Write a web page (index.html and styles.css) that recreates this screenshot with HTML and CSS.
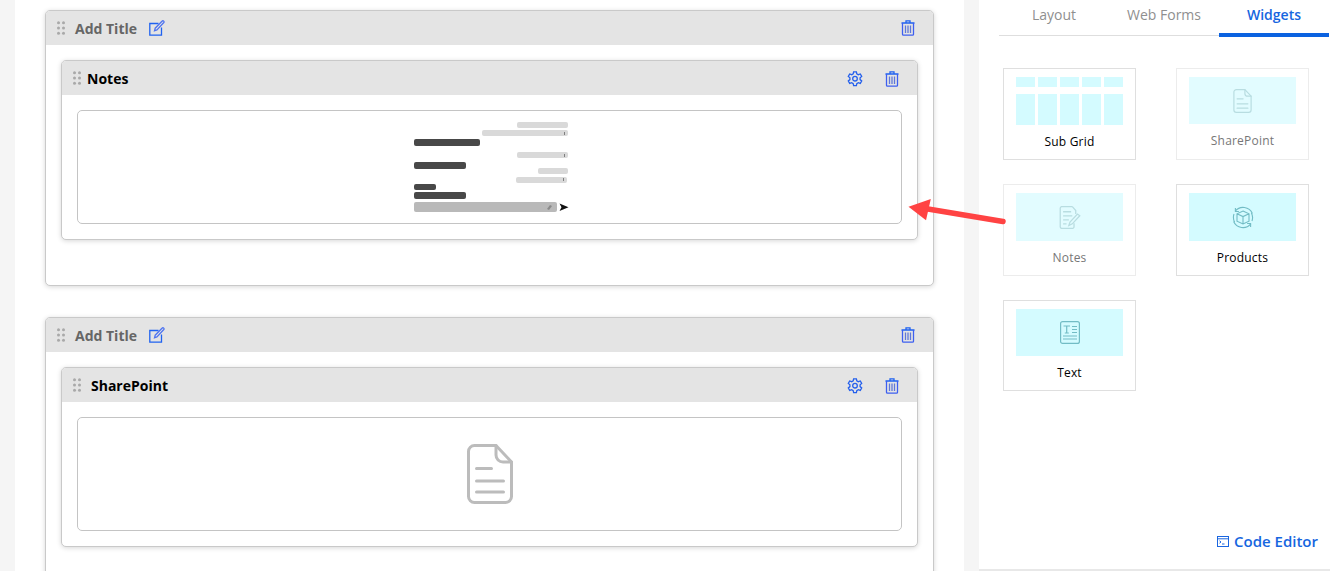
FILE: index.html
```html
<!DOCTYPE html>
<html lang="en">
<head>
  <meta charset="UTF-8">
  <title>Form Designer</title>
  <link rel="stylesheet" href="styles.css">
</head>
<body>

<svg width="0" height="0" class="defs">
  <symbol id="i-grip" viewBox="0 0 8 14"><g fill="#a9a9a9"><circle cx="1.5" cy="1.8" r="1.5"/><circle cx="6.5" cy="1.8" r="1.5"/><circle cx="1.5" cy="7" r="1.5"/><circle cx="6.5" cy="7" r="1.5"/><circle cx="1.5" cy="12.2" r="1.5"/><circle cx="6.5" cy="12.2" r="1.5"/></g></symbol>
  <symbol id="i-edit" viewBox="0 0 16 16"><g fill="none" stroke="#1f62f0" stroke-width="1.3"><path d="M9.5 3.5H.8v11.7h11.700V7.500"/><path d="M5.500 10.800l.7-2.600L13 1.200c.6-.6 1.200-.6 1.700-.1s.5 1.100-.1 1.700L7.900 9.900z" stroke="#4f74f0"/></g></symbol>
  <symbol id="i-trash" viewBox="0 0 14 16"><g fill="none" stroke="#1f62f0" stroke-width="1.3"><path d="M.5 3h13M5 3V.8h4V3"/><path d="M1.500 3v11.200c0 .6.4 1 1 1h9c.6 0 1-.4 1-1V3" stroke="#3d5ff0"/><path d="M4.500 5.500v7.500M7 5.500v7.500M9.500 5.500v7.500" stroke="#5f78d8"/></g></symbol>
  <symbol id="i-gear" viewBox="0 0 16 16"><g fill="none" stroke="#2560ec" stroke-width="1.300"><path d="M6.600.8h2.800l.4 2 1.500.9 2-.7 1.400 2.400-1.600 1.400v1.800l1.600 1.400-1.400 2.400-2-.7-1.500.9-.4 2H6.600l-.4-2-1.500-.9-2 .7L1.300 10l1.600-1.400V6.800L1.300 5.400l1.400-2.400 2 .7 1.500-.9z"/><circle cx="8" cy="7.700" r="2.300"/></g></symbol>
  <symbol id="i-doc" viewBox="0 0 46 60"><g fill="none" stroke="currentColor" stroke-width="3" stroke-linecap="round" stroke-linejoin="round"><path d="M29 1.500H7.500a6 6 0 0 0-6 6v45a6 6 0 0 0 6 6h31a6 6 0 0 0 6-6V18z"/><path d="M29 1.500V11a7 7 0 0 0 7 7h8.500"/><path d="M9.500 24.500h15M9.500 37h27M9.500 48h27"/></g></symbol>
  <symbol id="i-notes" viewBox="0 0 18 20"><g fill="none" stroke="currentColor" stroke-width="1.100"><path d="M11 .5H2A1.500 1.500 0 0 0 .5 2v16A1.500 1.500 0 0 0 2 19.500h9a1.500 1.500 0 0 0 1.500-1.500v-3M11 .5l3 3.500v3"/><path d="M3 5h7M3 8.500h8M3 12h5M3 15.500h3"/><path d="M8 17l1-3 6.500-7 2 1.500-6.500 7z"/></g></symbol>
  <symbol id="i-box" viewBox="0 0 22 22"><g fill="none" stroke="currentColor" stroke-width="1.100"><path d="M3.200 4.600A10.200 10.200 0 0 1 20.400 7M18.800 17.400A10.200 10.200 0 0 1 1.600 15"/><path d="M2 7.500a10 10 0 0 0 .6 8M20 14.500a10 10 0 0 0-.6-8"/><path d="M3.400 1.500v3.500h3.500M18.600 20.500V17h-3.500"/><path d="M11 4.500l6 2.800v7.400l-6 2.800-6-2.800V7.300zM5 7.300l6 2.800 6-2.800M11 10.100v7.400"/></g></symbol>
  <symbol id="i-text" viewBox="0 0 20 23"><g fill="none" stroke="currentColor" stroke-width="1.200"><rect x=".6" y=".6" width="18.800" height="21.800" rx="2"/><path d="M3.500 5h6.500M6.700 5v7M4.800 12h4M12 5.500h5M12 8.500h5M12 11.500h5M3 15h14M3 18h14"/></g></symbol>
  <symbol id="i-console" viewBox="0 0 12 11"><g fill="none" stroke="#1a66e0" stroke-width="1"><rect x=".5" y=".5" width="11" height="10"/><path d="M.5 2.800h11"/><path d="M2.500 4.800l1.500 1.200-1.500 1.200M5 8h2.500"/></g></symbol>
</svg>

<div class="page">
  <div class="strip"></div>

  <main class="canvas">
    <section class="card">
      <div class="bar">
        <svg class="grip"><use href="#i-grip"/></svg>
        <span class="section-title">Add Title</span>
        <svg class="ico edit"><use href="#i-edit"/></svg>
        <svg class="ico trash end"><use href="#i-trash"/></svg>
      </div>
      <div class="card-body">
        <div class="card inner">
          <div class="bar">
            <svg class="grip"><use href="#i-grip"/></svg>
            <span class="widget-title">Notes</span>
            <svg class="ico gear end"><use href="#i-gear"/></svg>
            <svg class="ico trash"><use href="#i-trash"/></svg>
          </div>
          <div class="card-body">
            <div class="preview">
              <svg class="chat" width="190" height="112" viewBox="395 111 190 112">
                <g fill="#d9d9d9">
                  <rect x="517" y="122" width="51" height="6" rx="2"/>
                  <rect x="482" y="130" width="86" height="6" rx="2"/>
                  <rect x="517" y="152" width="51" height="6" rx="2"/>
                  <rect x="538" y="168" width="30" height="6" rx="2"/>
                  <rect x="516" y="177" width="51" height="6" rx="2"/>
                </g>
                <g fill="#7f7f7f">
                  <rect x="564" y="132" width="1" height="3"/>
                  <rect x="564" y="154" width="1" height="3"/>
                  <rect x="563" y="178" width="1" height="3"/>
                </g>
                <g fill="#484848">
                  <rect x="414" y="139" width="66" height="7" rx="2"/>
                  <rect x="414" y="162" width="52" height="7" rx="2"/>
                  <rect x="414" y="184" width="22" height="6" rx="2"/>
                  <rect x="414" y="192" width="52" height="7" rx="2"/>
                </g>
                <rect x="414" y="202" width="143" height="10" rx="2" fill="#b9b9b9"/>
                <path d="M547 209l3-4 2 1-3 4z" fill="#8a8a8a"/>
                <path d="M559.500 203.500l9 3.800-9 3.800 2-3.800z" fill="#111"/>
              </svg>
            </div>
          </div>
        </div>
      </div>
    </section>

    <section class="card">
      <div class="bar">
        <svg class="grip"><use href="#i-grip"/></svg>
        <span class="section-title">Add Title</span>
        <svg class="ico edit"><use href="#i-edit"/></svg>
        <svg class="ico trash end"><use href="#i-trash"/></svg>
      </div>
      <div class="card-body">
        <div class="card inner">
          <div class="bar">
            <svg class="grip"><use href="#i-grip"/></svg>
            <span class="widget-title wide">SharePoint</span>
            <svg class="ico gear end"><use href="#i-gear"/></svg>
            <svg class="ico trash"><use href="#i-trash"/></svg>
          </div>
          <div class="card-body">
            <div class="preview">
              <svg class="doc-big"><use href="#i-doc"/></svg>
            </div>
          </div>
        </div>
      </div>
    </section>
  </main>

  <div class="strip"></div>

  <aside class="sidebar">
    <nav class="tabs">
      <a class="tab">Layout</a>
      <a class="tab">Web Forms</a>
      <a class="tab active">Widgets</a>
    </nav>

    <div class="widgets">
      <div class="tile">
        <div class="thumb grid-thumb">
          <i></i><i></i><i></i><i></i><i></i>
          <i></i><i></i><i></i><i></i><i></i>
        </div>
        <span>Sub Grid</span>
      </div>
      <div class="tile off">
        <div class="thumb short"><svg class="doc-small"><use href="#i-doc"/></svg></div>
        <span>SharePoint</span>
      </div>
      <div class="tile off">
        <div class="thumb"><svg class="tile-ico"><use href="#i-notes"/></svg></div>
        <span>Notes</span>
      </div>
      <div class="tile">
        <div class="thumb"><svg class="tile-ico"><use href="#i-box"/></svg></div>
        <span>Products</span>
      </div>
      <div class="tile">
        <div class="thumb short"><svg class="tile-ico"><use href="#i-text"/></svg></div>
        <span>Text</span>
      </div>
    </div>

    <a class="code-editor"><svg class="console"><use href="#i-console"/></svg>Code Editor</a>
  </aside>
</div>

<svg class="arrow" width="110" height="36" viewBox="900 192 110 36">
  <path d="M1003 221.500L925 208.500" stroke="#ff4343" stroke-width="5.500" stroke-linecap="round"/>
  <path d="M908.500 206.800L930.800 199 926 220.300z" fill="#ff4343"/>
</svg>

</body>
</html>
```

FILE: styles.css
```css
html, body { margin: 0; height: 100%; overflow: hidden; }
body { font-family: "Open Sans", "Noto Sans", sans-serif; font-size: 13px; background-color: #fff; color: #000; }
.defs { position: absolute; }

.page { display: grid; grid-template-columns: 15px 949px 15px 351px; height: 571px; }
.strip { background-color: #f5f5f5; }

.canvas { padding: 10px 30px 0 30px; display: flex; flex-direction: column; gap: 31px; overflow: hidden; }

.card { background-color: #fff; border: 1px solid #c9c9c9; border-radius: 5px; box-shadow: 0 1px 5px rgba(0, 0, 0, 0.16); overflow: hidden; flex: none; }
.card > .card-body { padding: 15px 15px 45px; }
.card.inner > .card-body { padding: 15px; }
.bar { display: flex; align-items: center; height: 34px; background-color: #e4e4e4; padding: 0 18px 0 11px; }
.grip { width: 8px; height: 14px; flex: none; }
.section-title { font-size: 14px; font-weight: 700; color: #666; margin-left: 10px; }
.widget-title { font-size: 14px; font-weight: 700; color: #000; margin-left: 6px; }
.widget-title.wide { margin-left: 10px; }
.ico { flex: none; }
.edit { width: 16px; height: 16px; margin-left: 12px; }
.trash { width: 14px; height: 16px; }
.gear { width: 16px; height: 16px; margin-right: 22px; }
.inner .ico { margin-top: 1px; }
.end { margin-left: auto; }

.preview { display: flex; align-items: center; justify-content: center; height: 112px; border: 1px solid #c4c4c4; border-radius: 5px; }
.chat { display: block; }
.doc-big { width: 46px; height: 60px; color: #bcbcbc; }

.sidebar { display: flex; flex-direction: column; border-bottom: 2px solid #e8e8e8; box-sizing: border-box; }
.tabs { display: flex; height: 36px; box-sizing: border-box; margin: 0 1px 0 20px; border-bottom: 1px solid #dedede; }
.tab { box-sizing: border-box; width: 110px; height: 37px; line-height: 30px; text-align: center; font-size: 14px; color: #8f8f8f; }
.tab.active { color: #1666e0; font-weight: 600; border-bottom: 4px solid #0b62e0; }

.widgets { display: grid; grid-template-columns: 133px 133px; grid-template-rows: 92px 92px 91px; column-gap: 40px; row-gap: 24px; margin: 32px 0 0 24px; }
.tile { box-sizing: border-box; border: 1px solid #dfdfdf; padding: 8px 12px 0; text-align: center; font-size: 12px; line-height: 16px; letter-spacing: 0.2px; }
.tile span { display: block; margin-top: 9px; }
.tile.off { border-color: #ececec; color: #777; }
.thumb { display: flex; align-items: center; justify-content: center; height: 48px; background-color: #d4fbff; color: #72bcc5; }
.thumb.short { height: 47px; }
.tile.off .thumb { background-color: #e2fcff; color: #b8dde1; }
.tile-ico { width: 22px; height: 23px; }
.doc-small { width: 19px; height: 24px; }
.grid-thumb { display: grid; grid-template-columns: repeat(5, 1fr); grid-template-rows: 10px 31px; gap: 7px 3px; align-items: stretch; justify-content: stretch; background: none; height: 48px; }
.grid-thumb i { background-color: #d4fbff; }

.code-editor { display: flex; align-items: center; justify-content: flex-end; margin-top: auto; padding: 0 12px 18px 0; font-size: 15px; font-weight: 600; color: #1666e0; }
.console { width: 12px; height: 11px; margin-right: 5px; }

.arrow { position: absolute; left: 900px; top: 192px; }
```
